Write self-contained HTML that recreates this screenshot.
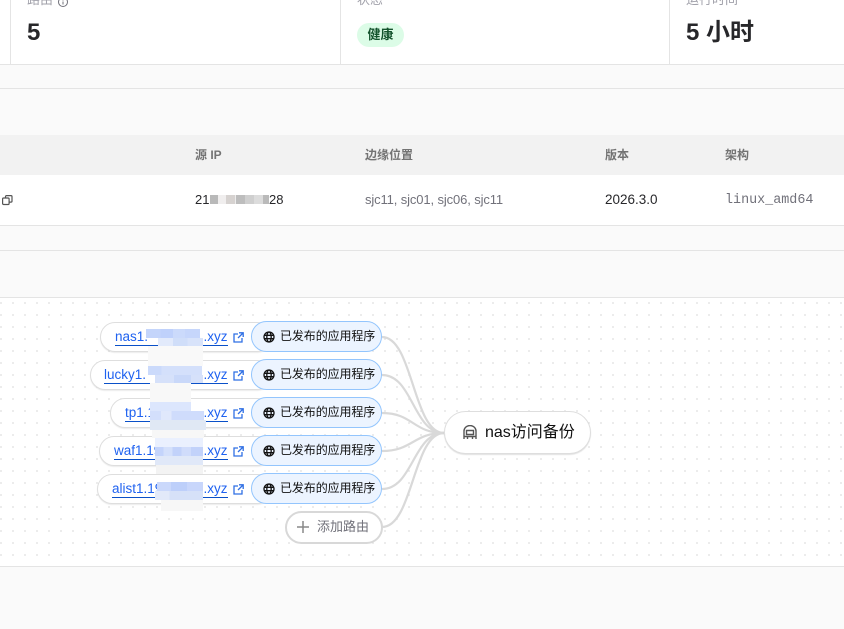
<!DOCTYPE html>
<html><head><meta charset="utf-8"><style>
html,body{margin:0;padding:0}
body{width:844px;height:629px;overflow:hidden;background:#fafafa;position:relative;font-family:"Liberation Sans","Noto Sans CJK SC",sans-serif;color:#27272a}
.a{position:absolute;white-space:nowrap}
.l{position:absolute;height:1px;left:0;width:844px;background:#e4e4e4}
.v{position:absolute;width:1px;top:0;height:64px;background:#e4e4e4}
.th{position:absolute;top:147px;font-size:12px;line-height:16px;font-weight:700;color:#737373}
.td{position:absolute;top:192px;font-size:13px;line-height:16px}
.lab{position:absolute;top:0;font-size:13px;line-height:16px;color:#a1a1aa}
.big{position:absolute;font-size:24px;line-height:30px;font-weight:700;top:17.500px;color:#27272a}
.pill{position:absolute;height:28px;border:1.500px solid #dedede;border-radius:16px;background:#fff;box-shadow:0 1px 1px rgba(0,0,0,.08)}
.app{position:absolute;left:251px;width:129px;height:29px;border:1px solid #93c5fd;border-radius:16px;background:#ecf4ff}
.apt{position:absolute;left:280px;font-size:12px;line-height:17px;color:#111;letter-spacing:-.1px}
.link{position:absolute;font-size:13.500px;line-height:16px;color:#1f62f0;height:16px;border-bottom:1.500px solid #0a50c8;box-sizing:content-box}
.xyz{position:absolute;font-size:13.500px;line-height:16px;color:#1f62f0;left:203.500px}
.m{position:absolute}
</style></head><body>
<div class="a" style="left:0;top:0;width:844px;height:64px;background:#fff"></div>
<div class="v" style="left:10px"></div><div class="v" style="left:340px"></div><div class="v" style="left:669px"></div>
<div class="l" style="top:64px"></div><div class="l" style="top:88px"></div>
<div class="lab" style="left:27px;top:-8px">路由</div>
<svg class="a" style="left:57px;top:-4px" width="12" height="12" viewBox="0 0 12 12" fill="none" stroke="#71717a"><circle cx="6" cy="6" r="4.500"/><path d="M6 5.500V8.500M6 3.500V4.500"/></svg>
<div class="lab" style="left:357px;top:-8px">状态</div>
<div class="lab" style="left:686px;top:-8px">运行时间</div>
<div class="big" style="left:27px">5</div>
<div class="a" style="left:357px;top:23px;width:47px;height:24px;border-radius:12px;background:#dcfce7;color:#14532d;font-size:13px;font-weight:700;line-height:24px;text-align:center">健康</div>
<div class="big" style="left:686px">5 小时</div>

<div class="a" style="left:0;top:135px;width:844px;height:40px;background:#f2f2f2"></div>
<div class="a" style="left:0;top:175px;width:844px;height:50px;background:#fff"></div>
<div class="l" style="top:225px"></div><div class="l" style="top:250px"></div>
<div class="th" style="left:195px">源 IP</div><div class="th" style="left:365px">边缘位置</div><div class="th" style="left:605px">版本</div><div class="th" style="left:725px">架构</div>
<svg class="a" style="left:2px;top:195px" width="11" height="11" viewBox="0 0 11 11" fill="none" stroke="#555" stroke-width="1.200"><rect x="3.500" y=".6" width="6.500" height="6.500" rx="1"/><rect x=".6" y="3" width="6.500" height="6.500" rx="1" fill="#fff"/></svg>
<div class="td" style="left:195px;color:#27272a">21</div>
<div class="td" style="left:269px;color:#27272a">28</div>
<div class="m" style="left:210px;top:195px;width:8px;height:9px;background:#b9b9b9"></div>
<div class="m" style="left:218px;top:195px;width:8px;height:9px;background:#f0eeee"></div>
<div class="m" style="left:226px;top:195px;width:9px;height:9px;background:#d6d2d0"></div>
<div class="m" style="left:235px;top:195px;width:1px;height:9px;background:#ececec"></div>
<div class="m" style="left:236px;top:195px;width:9px;height:9px;background:#bdbdbd"></div>
<div class="m" style="left:245px;top:195px;width:9px;height:9px;background:#cfcfcf"></div>
<div class="m" style="left:254px;top:195px;width:9px;height:9px;background:#dcdcdc"></div>
<div class="m" style="left:263px;top:195px;width:6px;height:9px;background:#bababa"></div>
<div class="td" style="left:365px;color:#71717a;letter-spacing:-.12px">sjc11, sjc01, sjc06, sjc11</div>
<div class="td" style="left:605px;color:#27272a;font-size:13.500px">2026.3.0</div>
<div class="td" style="left:725px;top:193px;color:#71717a;font-family:'Liberation Mono',monospace;font-size:13.400px">linux_amd64</div>

<div class="a" style="left:0;top:297px;width:844px;height:270px;box-sizing:border-box;border-top:1px solid #e4e4e4;border-bottom:1px solid #e4e4e4;background-color:#fff;background-image:radial-gradient(circle at 1px 1px,#e0e0e0 .7px,transparent 1px);background-size:12px 12px;background-position:0px 4px"></div>

<svg class="a" style="left:0;top:0" width="844" height="629" fill="none" stroke="#d9d9d9" stroke-width="2.200">
<path d="M382 337C413 337 413 433 444 433"/><path d="M382 375C413 375 413 433 444 433"/><path d="M382 413C413 413 413 433 444 433"/><path d="M382 451C413 451 413 433 444 433"/><path d="M382 489C413 489 413 433 444 433"/><path d="M382 527C413 527 413 433 444 433"/>
</svg>

<div class="pill" style="left:100px;top:322px;width:170px"></div>
<div class="pill" style="left:90px;top:360px;width:180px"></div>
<div class="pill" style="left:110px;top:398px;width:160px"></div>
<div class="pill" style="left:99px;top:436px;width:171px"></div>
<div class="pill" style="left:97px;top:474px;width:173px"></div>

<div class="link" style="left:115px;top:329px;width:113px">nas1.</div>
<div class="link" style="left:104px;top:367px;width:124px">lucky1.</div>
<div class="link" style="left:125px;top:405px;width:103px">tp1.1</div>
<div class="link" style="left:114px;top:443px;width:114px">waf1.19</div>
<div class="link" style="left:112px;top:481px;width:116px">alist1.19</div>
<div class="xyz" style="top:329px">.xyz</div><div class="xyz" style="top:367px">.xyz</div><div class="xyz" style="top:405px">.xyz</div><div class="xyz" style="top:443px">.xyz</div><div class="xyz" style="top:481px">.xyz</div>

<!-- mosaics -->
<div class="m" style="left:146px;top:329px;width:54px;height:9px;background:linear-gradient(90deg,#c4d5fb 0 27%,#bfd1fb 27% 50%,#cbdafb 50% 72%,#c6d6fb 72% 100%)"></div>
<div class="m" style="left:158px;top:338px;width:45px;height:8px;background:linear-gradient(90deg,#e2eafb 0 33%,#d0def9 33% 66%,#d8e3fa 66% 100%)"></div>
<div class="m" style="left:148px;top:346px;width:55px;height:20px;background:#f9f9f9"></div>
<div class="m" style="left:148px;top:366px;width:54px;height:9px;background:linear-gradient(90deg,#cbdafb 0 25%,#d4e0fb 25% 100%)"></div>
<div class="m" style="left:155px;top:375px;width:48px;height:8px;background:linear-gradient(90deg,#d6e1fa 0 40%,#c9d8f9 40% 75%,#d6e1fa 75% 100%)"></div>
<div class="m" style="left:150px;top:383px;width:41px;height:19px;background:#f8f8f8"></div>
<div class="m" style="left:150px;top:402px;width:41px;height:9px;background:#dce6fd"></div>
<div class="m" style="left:150px;top:411px;width:54px;height:9px;background:linear-gradient(90deg,#d3dffc 0 20%,#e0e8fc 20% 40%,#cfdcfc 40% 100%)"></div>
<div class="m" style="left:150px;top:420px;width:56px;height:10px;background:#e0e8f4"></div>
<div class="m" style="left:152px;top:430px;width:52px;height:8px;background:#f7f7f7"></div>
<div class="m" style="left:155px;top:438px;width:48px;height:9px;background:#eaf0fe"></div>
<div class="m" style="left:155px;top:447px;width:48px;height:9px;background:linear-gradient(90deg,#c4d4fb 0 18%,#d4e0fb 18% 36%,#c2d2fa 36% 55%,#d0dcfb 55% 75%,#c2d2fa 75% 100%)"></div>
<div class="m" style="left:155px;top:456px;width:48px;height:9px;background:#e0e8f8"></div>
<div class="m" style="left:156px;top:465px;width:47px;height:9px;background:#f3f3f3"></div>
<div class="m" style="left:157px;top:482px;width:46px;height:9px;background:linear-gradient(90deg,#cad8fb 0 30%,#bdcffa 30% 65%,#c8d6fb 65% 100%)"></div>
<div class="m" style="left:155px;top:491px;width:48px;height:9px;background:linear-gradient(90deg,#e2e9f9 0 30%,#d6e1f8 30% 100%)"></div>
<div class="m" style="left:161px;top:500px;width:42px;height:11px;background:#f7f7f7"></div>

<!-- external icons -->
<svg width="0" height="0" style="position:absolute"><defs>
<symbol id="e" viewBox="0 0 11 11"><path d="M5 2H1V10H9V6M6 .8H10.200V5M10 1L5 6" fill="none" stroke="#2f6fe4" stroke-width="1.300"/></symbol>
<symbol id="g" viewBox="0 0 12 12"><g fill="none" stroke="#111" stroke-width="1.300"><circle cx="6" cy="6" r="5"/><ellipse cx="6" cy="6" rx="2.200" ry="5"/><path d="M1 4.300H11M1 7.700H11"/></g></symbol>
</defs></svg>
<svg class="a" style="left:233px;top:332px" width="11" height="11"><use href="#e"/></svg>
<svg class="a" style="left:233px;top:370px" width="11" height="11"><use href="#e"/></svg>
<svg class="a" style="left:233px;top:408px" width="11" height="11"><use href="#e"/></svg>
<svg class="a" style="left:233px;top:446px" width="11" height="11"><use href="#e"/></svg>
<svg class="a" style="left:233px;top:484px" width="11" height="11"><use href="#e"/></svg>

<div class="app" style="top:321px"></div><div class="app" style="top:359px"></div><div class="app" style="top:397px"></div><div class="app" style="top:435px"></div><div class="app" style="top:473px"></div>
<svg class="a" style="left:263px;top:331px" width="12" height="12"><use href="#g"/></svg>
<svg class="a" style="left:263px;top:369px" width="12" height="12"><use href="#g"/></svg>
<svg class="a" style="left:263px;top:407px" width="12" height="12"><use href="#g"/></svg>
<svg class="a" style="left:263px;top:445px" width="12" height="12"><use href="#g"/></svg>
<svg class="a" style="left:263px;top:483px" width="12" height="12"><use href="#g"/></svg>
<div class="apt" style="top:328px">已发布的应用程序</div>
<div class="apt" style="top:366px">已发布的应用程序</div>
<div class="apt" style="top:404px">已发布的应用程序</div>
<div class="apt" style="top:442px">已发布的应用程序</div>
<div class="apt" style="top:480px">已发布的应用程序</div>

<div class="a" style="left:285px;top:511px;width:94px;height:29px;border:2px solid #d8d8d8;border-radius:17px;background:#fff"></div>
<svg class="a" style="left:296px;top:520px" width="14" height="14" fill="none" stroke="#888" stroke-width="1.500"><path d="M7 1V13M1 7H13"/></svg>
<div class="a" style="left:317px;top:518px;font-size:13px;line-height:17px;color:#71717a">添加路由</div>

<div class="a" style="left:444px;top:411px;width:145px;height:41px;border:1px solid #dedede;border-radius:22px;background:#fff;box-shadow:0 1px 1px rgba(0,0,0,.12)"></div>
<svg class="a" style="left:463px;top:425px" width="14" height="16" viewBox="0 0 14 16" fill="none" stroke="#555" stroke-width="1.400"><path d="M1 14V6A5.500 5 0 0 1 13 6V14M3.500 9.500V5.500H10.500V9.500ZM1 11.500H13M4.500 11.500V14M9.500 11.500V14"/></svg>
<div class="a" style="left:485px;top:424px;font-size:16px;line-height:18px;font-weight:400;color:#111">nas访问备份</div>
</body></html>
